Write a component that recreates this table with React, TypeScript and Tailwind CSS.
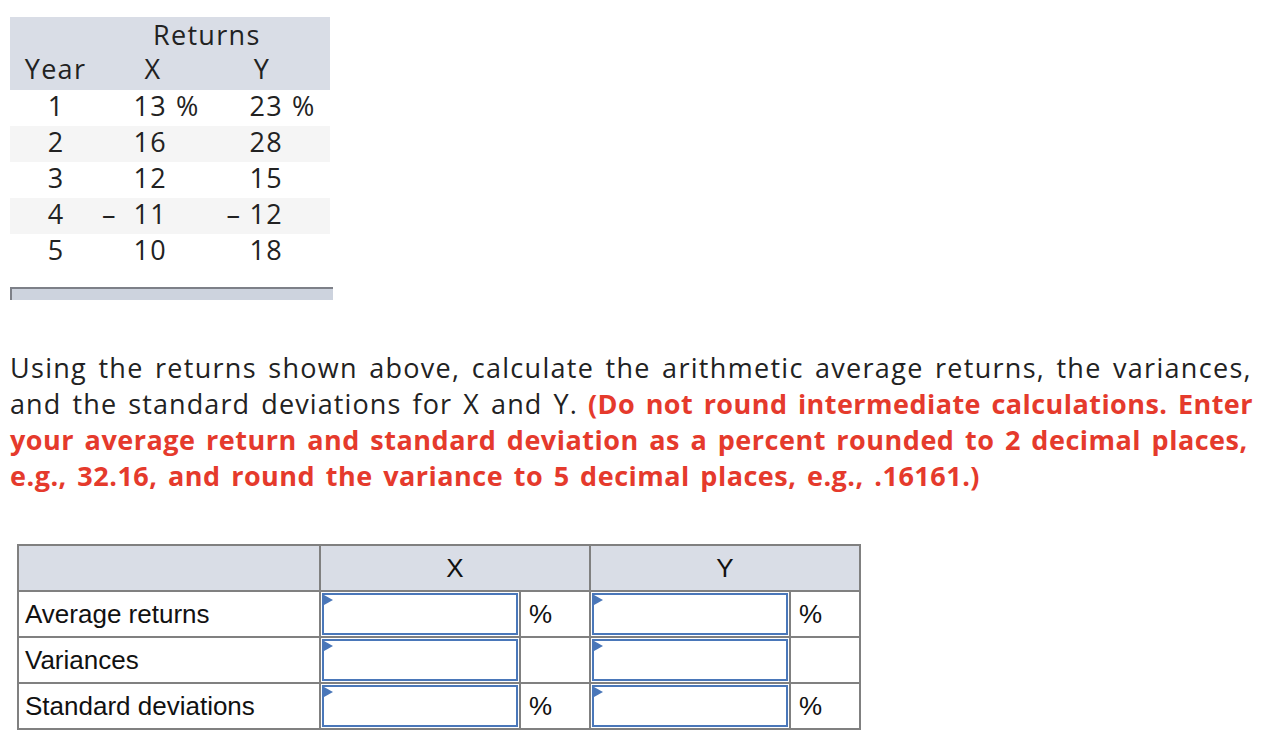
import React from 'react';

const rows = [
  { year: '1', x: '13', xPct: true, y: '23', yPct: true, stripe: false },
  { year: '2', x: '16', y: '28', stripe: true },
  { year: '3', x: '12', y: '15', stripe: false },
  { year: '4', x: '\u2013  11', y: '\u2013 12', stripe: true },
  { year: '5', x: '10', y: '18', stripe: false },
];

const answerRows = [
  { label: 'Average returns', pct: true },
  { label: 'Variances', pct: false },
  { label: 'Standard deviations', pct: true },
];

function AnswerInput() {
  return (
    <td className="w-[200px] border-2 border-[#808080] p-0 h-[46px]">
      <div className="relative h-[42px] mx-px border-2 border-[#4a77b9] bg-white">
        <span className="absolute left-0 top-0 w-0 h-0 border-l-[9px] border-l-[#4a77b9] border-y-[5px] border-y-transparent" />
      </div>
    </td>
  );
}

export default function App() {
  const proxima = { fontFamily: '"Open Sans", Lato, sans-serif' };
  return (
    <div className="w-[1282px] h-[756px] bg-white text-[#222] relative overflow-hidden">
      {/* returns table */}
      <div className="ml-[10px] pt-[17px] w-[323px] tracking-[1.3px]" style={proxima}>
        <div className="w-[320px] h-[73px] bg-[#d9dde6] text-[27px] leading-[34px] pt-[1px]">
          <div className="pl-[143px] w-[250px] text-center">Returns</div>
          <div className="flex">
            <div className="w-[90px] text-center pl-[1px]">Year</div>
            <div className="w-[106px] text-center">X</div>
            <div className="w-[112px] text-center">Y</div>
          </div>
        </div>
        {rows.map((r) => (
          <div
            key={r.year}
            className={`w-[320px] h-[36px] flex items-center text-[27px] pb-[3px] ${r.stripe ? 'bg-[#f5f5f5]' : 'bg-white'}`}
          >
            <div className="w-[92px] text-center">{r.year}</div>
            <div className="w-[65px] text-right whitespace-pre">{r.x}</div>
            <div className="w-[52px] pl-[9px]">{r.xPct ? '%' : ''}</div>
            <div className="w-[64px] text-right whitespace-pre">{r.y}</div>
            <div className="w-[38px] pl-[9px]">{r.yPct ? '%' : ''}</div>
          </div>
        ))}
        <div className="mt-[17px] h-[13px] w-[323px] bg-[#cdd3de] border-t-2 border-l-2 border-[#7d8088]" />
      </div>

      {/* question */}
      <div
        className="ml-[10px] mt-[50px] text-[27px] leading-[36px] whitespace-nowrap [word-spacing:3px]"
        style={proxima}
      >
        <div className="tracking-[1.3px]">
          Using the returns shown above, calculate the arithmetic average returns, the variances,
        </div>
        <div>
          <span className="tracking-[1.1px]">and the standard deviations for X and Y.</span>{' '}
          <span className="font-bold text-[#e53a2c] tracking-[0.45px]">(Do not round intermediate calculations. Enter</span>
        </div>
        <div className="font-bold text-[#e53a2c] tracking-[0.5px]">
          your average return and standard deviation as a percent rounded to 2 decimal places,
        </div>
        <div className="font-bold text-[#e53a2c] tracking-[0.5px]">
          e.g., 32.16, and round the variance to 5 decimal places, e.g., .16161.)
        </div>
      </div>

      {/* answer table */}
      <table
        className="ml-[17px] mt-[50px] border-collapse border-2 border-[#808080] text-[26px] text-[#111] table-fixed"
        style={{ fontFamily: '"Liberation Sans", Arial, sans-serif' }}
      >
        <colgroup>
          <col className="w-[302px]" />
          <col className="w-[200px]" />
          <col className="w-[70px]" />
          <col className="w-[200px]" />
          <col className="w-[70px]" />
        </colgroup>
        <thead>
          <tr className="bg-[#d9dde6] h-[46px]">
            <th className="border-2 border-[#808080]" />
            <th colSpan={2} className="border-2 border-[#808080] font-normal text-center">X</th>
            <th colSpan={2} className="border-2 border-[#808080] font-normal text-center">Y</th>
          </tr>
        </thead>
        <tbody>
          {answerRows.map((r) => (
            <tr key={r.label} className="h-[46px]">
              <td className="border-2 border-[#808080] pl-[6px] whitespace-nowrap">{r.label}</td>
              <AnswerInput />
              <td className="border-2 border-[#808080] pl-[8px]">{r.pct ? '%' : ''}</td>
              <AnswerInput />
              <td className="border-2 border-[#808080] pl-[8px]">{r.pct ? '%' : ''}</td>
            </tr>
          ))}
        </tbody>
      </table>
    </div>
  );
}
